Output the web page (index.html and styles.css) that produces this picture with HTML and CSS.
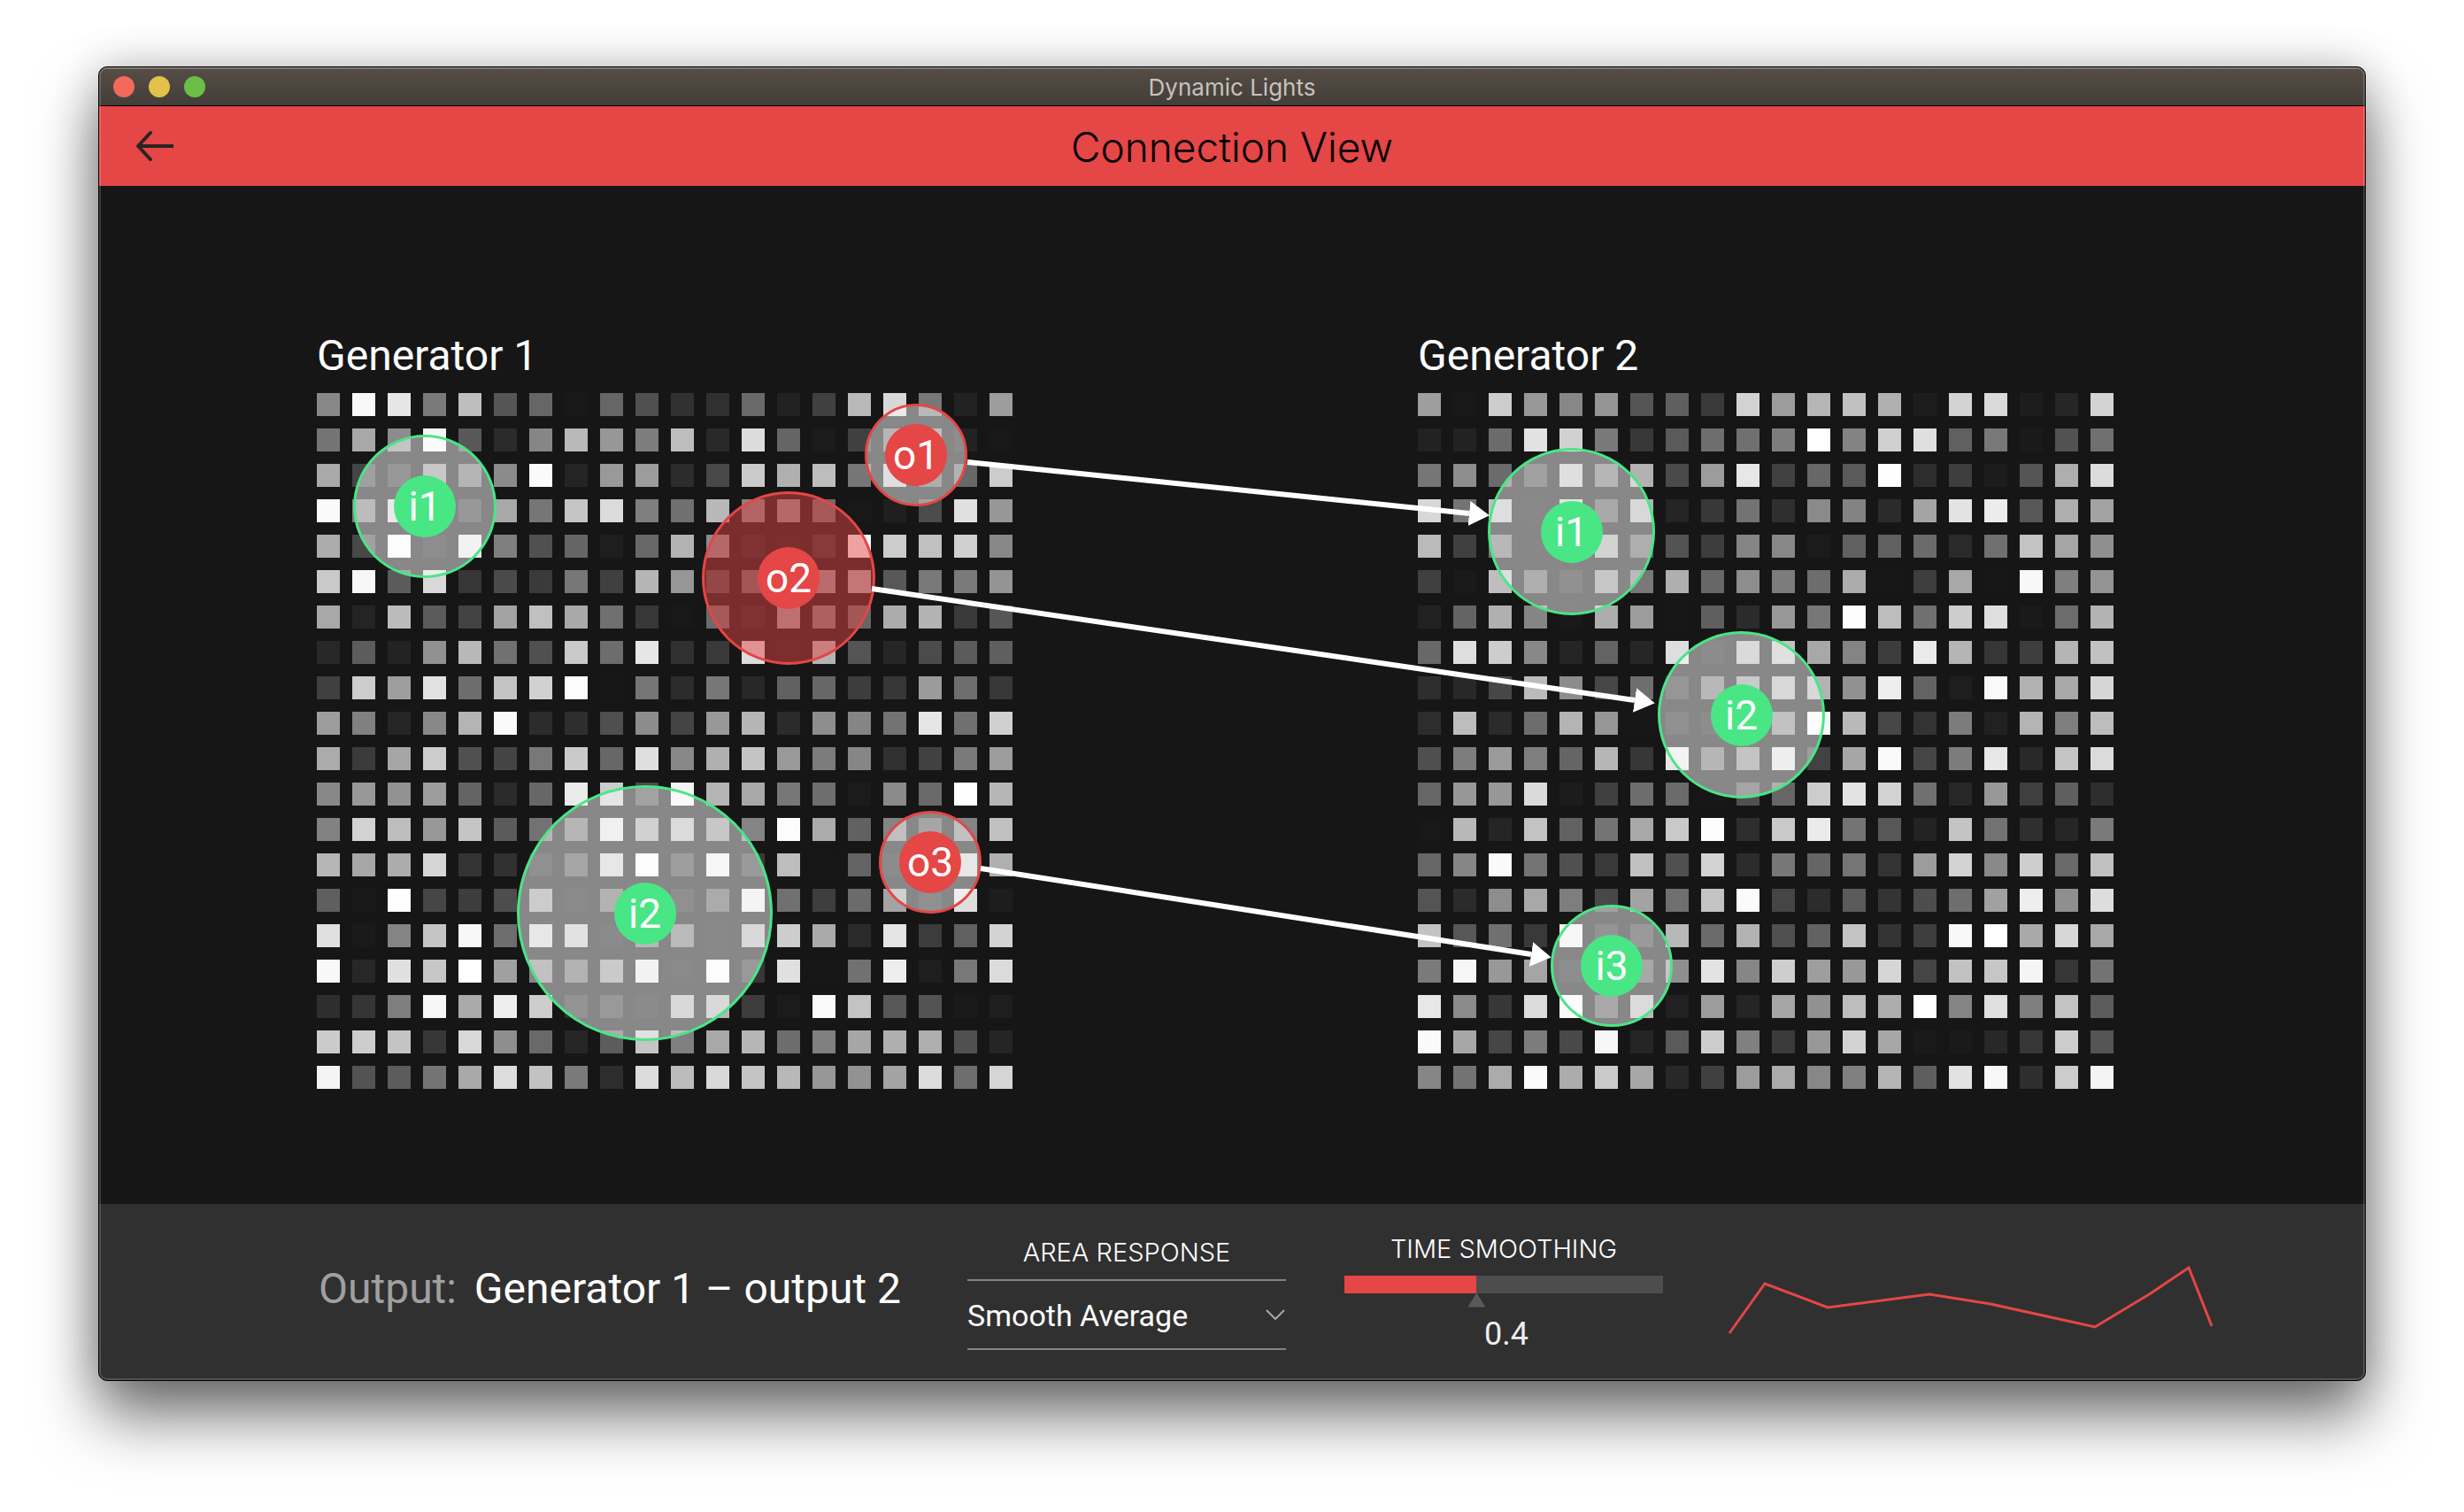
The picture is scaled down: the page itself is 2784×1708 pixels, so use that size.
FILE: index.html
```html
<!DOCTYPE html>
<html lang="en">
<head>
<meta charset="utf-8">
<title>Dynamic Lights</title>
<link rel="stylesheet" href="styles.css">
</head>
<body>
<div class="window">
  <div class="titlebar">
    <div class="lights">
      <button class="light light-close" aria-label="Close"></button>
      <button class="light light-minimize" aria-label="Minimize"></button>
      <button class="light light-zoom" aria-label="Zoom"></button>
    </div>
    <span class="titlebar-text">Dynamic Lights</span>
  </div>

  <header class="toolbar">
    <button class="back" aria-label="Back">
      <svg width="44" height="34" viewBox="0 0 44 34" fill="none" stroke="#2b2424" stroke-width="4">
        <path d="M3 17H43"/>
        <path d="M17 2L3 17L17 32" stroke-linecap="round" stroke-linejoin="round"/>
      </svg>
    </button>
    <h1 class="view-title">Connection View</h1>
  </header>

  <main class="stage">
    <div class="board">
      <section class="generator">
        <h2 class="generator-name">Generator 1</h2>
        <div class="matrix" id="matrix-1">
          <button class="zone input g1-i1"><span class="pin">i1</span></button>
          <button class="zone output g1-o1"><span class="pin">o1</span></button>
          <button class="zone output selected g1-o2"><span class="pin">o2</span></button>
          <button class="zone input g1-i2"><span class="pin">i2</span></button>
          <button class="zone output g1-o3"><span class="pin">o3</span></button>
        </div>
      </section>
      <section class="generator">
        <h2 class="generator-name">Generator 2</h2>
        <div class="matrix" id="matrix-2">
          <button class="zone input g2-i1"><span class="pin">i1</span></button>
          <button class="zone input g2-i2"><span class="pin">i2</span></button>
          <button class="zone input g2-i3"><span class="pin">i3</span></button>
        </div>
      </section>
      <svg class="links" viewBox="0 0 2030 858" fill="none" stroke="#fff" stroke-width="6">
        <defs>
          <marker id="head" markerUnits="userSpaceOnUse" markerWidth="23" markerHeight="28" refX="0" refY="14" orient="auto">
            <path d="M0 0L23 14L0 28Z" fill="#fff" stroke="none"/>
          </marker>
        </defs>
        <path d="M735 150L1302 208" marker-end="url(#head)"/>
        <path d="M627 293L1489 419" marker-end="url(#head)"/>
        <path d="M750 609L1372 706" marker-end="url(#head)"/>
      </svg>
    </div>
  </main>

  <footer class="inspector">
    <p class="subject"><span class="subject-kind">Output:</span> Generator 1 – output 2</p>

    <div class="field">
      <label class="field-label" for="response">AREA RESPONSE</label>
      <div class="picker">
        <select id="response" class="picker-select">
          <option>Smooth Average</option>
        </select>
        <svg class="picker-chevron" width="22" height="12" viewBox="0 0 22 12" fill="none" stroke="#a8a8a8" stroke-width="2">
          <path d="M1 1L11 11L21 1"/>
        </svg>
      </div>
    </div>

    <div class="field field-slider">
      <label class="field-label" for="smoothing">TIME SMOOTHING</label>
      <input id="smoothing" class="slider" type="range" min="0" max="1" step="0.01" value="0.41">
      <output class="slider-value" for="smoothing">0.4</output>
    </div>

    <svg class="trace" width="560" height="84" viewBox="0 0 560 84" fill="none" stroke="#e54646" stroke-width="3">
      <polyline points="9,79 49,23 120,50 235,35 304,46 422,72 485,34 528,5 554,71"/>
    </svg>
  </footer>
</div>
<script src="matrix.js"></script>
</body>
</html>
```
FILE: styles.css
```css
* {
  box-sizing: border-box;
}

body {
  margin: 0;
  min-height: 100vh;
  padding: 75px 111px 148px;
  display: flex;
  background: #fff;
  color: #fff;
  font-family: Roboto, "Liberation Sans", sans-serif;
}

h1, h2, p {
  margin: 0;
  font-weight: 400;
}

button {
  padding: 0;
  border: 0;
  background: none;
  color: inherit;
  font: inherit;
}

.window {
  position: relative;
  flex: 1;
  display: flex;
  flex-direction: column;
  border: 1px solid #000;
  border-radius: 10px;
  overflow: hidden;
  background: #161616;
  box-shadow: 0 40px 70px rgba(0, 0, 0, 0.55), 0 0 50px rgba(0, 0, 0, 0.2);
}

/* thin light edge drawn over the whole window */
.window::after {
  content: "";
  position: absolute;
  inset: 0;
  border-radius: 9px;
  box-shadow: inset 0 0 0 2px rgba(255, 255, 255, 0.16);
  pointer-events: none;
}

.titlebar {
  display: grid;
  grid-template-columns: 1fr auto 1fr;
  align-items: center;
  height: 44px;
  padding: 0 16px;
  border-bottom: 1px solid #000;
  background: linear-gradient(#574d46, #423e39);
  box-shadow: inset 0 2px rgba(255, 255, 255, 0.12);
}

.lights {
  display: flex;
  gap: 16px;
}

.light {
  width: 24px;
  height: 24px;
  border-radius: 50%;
}

.light-close { background: #f3695b; }
.light-minimize { background: #e4c04c; }
.light-zoom { background: #6bbf48; }

.titlebar-text {
  padding-top: 2px;
  color: #c8c2bb;
  font-family: Inter, sans-serif;
  font-size: 26px;
  line-height: 32px;
}

.toolbar {
  display: grid;
  grid-template-columns: 1fr auto 1fr;
  align-items: center;
  height: 90px;
  padding: 0 41px;
  background: #e54646;
  color: #000;
}

.back {
  display: flex;
  justify-self: start;
}

.view-title {
  padding-top: 2px;
  font-family: Inter, sans-serif;
  font-size: 46px;
  font-weight: 300;
  line-height: 56px;
}

.stage {
  flex: 1;
  display: flex;
  justify-content: center;
  padding: 162px 38px 0 0;
}

.board {
  position: relative;
  display: flex;
  align-items: flex-start;
  gap: 458px;
}

.generator-name {
  margin-bottom: 12px;
  font-size: 48px;
  line-height: 60px;
}

.matrix {
  position: relative;
  display: grid;
  grid-template-columns: repeat(20, 26px);
  grid-auto-rows: 26px;
  gap: 14px;
}

.links {
  position: absolute;
  inset: 0;
  width: 100%;
  height: 858px;
  pointer-events: none;
}

.zone {
  position: absolute;
  display: flex;
  align-items: center;
  justify-content: center;
  border: 3px solid;
  border-radius: 50%;
  background: rgba(255, 255, 255, 0.49);
}

.input { border-color: #49e686; }
.output { border-color: #e54646; }
.selected { background: rgba(229, 70, 70, 0.49); }

.pin {
  width: 70px;
  height: 70px;
  border-radius: 50%;
  color: #fff;
  font-size: 46px;
  line-height: 70px;
  text-align: center;
}

.input .pin { background: #49e686; }
.output .pin { background: #e54646; }

.g1-i1 { left: 41px; top: 47px; width: 162px; height: 162px; }
.g1-o1 { left: 619px; top: 12px; width: 116px; height: 116px; }
.g1-o2 { left: 435px; top: 111px; width: 196px; height: 196px; }
.g1-i2 { left: 226px; top: 443px; width: 289px; height: 289px; }
.g1-o3 { left: 635px; top: 472px; width: 116px; height: 116px; }
.g2-i1 { left: 79px; top: 62px; width: 189px; height: 189px; }
.g2-i2 { left: 271px; top: 269px; width: 189px; height: 189px; }
.g2-i3 { left: 150px; top: 578px; width: 138px; height: 138px; }

.inspector {
  display: grid;
  grid-template-columns: 669px 360px 360px 1fr;
  column-gap: 66px;
  align-items: center;
  height: 199px;
  padding: 4px 100px 0 246px;
  background: #303030;
}

.subject {
  padding: 0 0 12px 2px;
  font-size: 48px;
  line-height: 56px;
  white-space: nowrap;
}

.subject-kind {
  margin-right: 8px;
  color: #a0a0a0;
}

.field {
  display: flex;
  flex-direction: column;
  align-items: center;
}

.field-label {
  font-family: Inter, sans-serif;
  font-size: 29px;
  font-weight: 300;
  line-height: 32px;
}

.picker {
  position: relative;
  width: 100%;
  margin-top: 14px;
}

.picker-select {
  width: 100%;
  height: 80px;
  padding: 2px 0 0;
  border: solid #858585;
  border-width: 2px 0;
  border-radius: 0;
  appearance: none;
  background: none;
  color: #fff;
  font-family: inherit;
  font-size: 34px;
}

.picker-chevron {
  position: absolute;
  right: 1px;
  top: 34px;
  pointer-events: none;
}

.slider {
  appearance: none;
  width: 100%;
  height: 20px;
  margin: 14px 0 0;
  background: linear-gradient(90deg, #e54646 149px, #4d4d4d 149px);
}

.slider::-webkit-slider-thumb {
  appearance: none;
  width: 20px;
  height: 16px;
  margin-top: 36px;
  background: #5a5a5a;
  clip-path: polygon(50% 0, 100% 100%, 0 100%);
}

.slider-value {
  margin-top: 24px;
  padding-left: 6px;
  color: #eee;
  font-size: 36px;
  line-height: 44px;
}

.trace {
  margin-top: 14px;
}
```
FILE: matrix.js
```js
// Brightness of every light, one row per line, two hex digits per light.
const levels = {
  "matrix-1": `
88 f8 e6 7a be 55 66 18 66 50 31 30 69 22 40 b9 d8 77 22 9d
74 a8 8c f5 58 2b 86 b9 97 7d bd 29 dc 65 1b 40 71 81 22 18
aa 45 35 93 6d 8b fa 24 99 9c 2c 48 cb b0 bd 76 c1 61 68 cc
fa 7d d5 80 35 a8 76 c5 db 7f 70 b8 82 8a 6a 18 1f 4b e0 97
ac 48 fa 21 e6 7f 50 65 1e 68 b3 8a 22 1a 30 fa cc c0 d0 87
c9 f7 5b d9 36 4a 3a 77 40 b5 96 4a 66 60 92 a6 58 78 7a 94
a8 24 bb 5b 42 a2 c0 a9 70 38 18 6b 22 9a 7a 66 ac b3 3a 56
28 5c 23 91 b8 71 50 c9 6d e6 30 39 dd 18 b4 54 26 4b 5b 5f
40 cc 9e e2 6d c3 d1 fc 17 75 2c 77 27 61 67 3d 37 9b 6e 38
9d 80 26 88 b4 fa 2c 2e 4f 8c 44 98 b5 2b 8d 85 73 e6 70 d0
ab 3b a6 cc 50 44 78 ca 67 df 88 b0 c4 99 7c 86 30 41 7a 9c
88 98 92 9c 63 2b 67 ea cc 4a f3 b4 a8 77 6e 1b 8a 69 fe b6
82 d2 bd 98 c5 5b 72 71 e1 a5 b9 91 84 fc ab 61 84 51 85 c0
b6 a7 ac d6 34 31 27 51 d1 f9 41 ed 3a bd 17 63 1f 50 d1 b0
5f 19 fe 46 3d 4d 9b 1b 6b 70 27 5b e9 70 3e 6b a4 27 de 1d
e0 1a 84 c5 f8 6e d1 c5 1d 75 79 18 b3 cd aa 2a e4 3c 60 d3
f8 27 e0 c7 ff a0 85 6b 97 e5 1b f9 37 e0 17 71 ee 1e 78 db
2e 35 7e f7 aa ee cd 2e 37 1d b5 b5 3c 1b f9 c3 57 53 1a 1e
cb cd c4 37 d8 8e 69 26 5c c5 80 a8 b6 6d 80 a6 af ae 50 25
f3 53 5c 74 a9 dd c2 7a 2d dc bc d8 c4 b8 97 92 a3 dc 6e d5`,
  "matrix-2": `
9e 18 cd 98 87 95 55 5f 39 d2 9c b6 c1 b0 1d d2 da 1d 26 d3
22 22 6b e2 d1 79 38 5a 6e 70 7d ff 83 d0 df 60 78 1a 52 70
76 8d 6b 47 c1 71 b2 4a 9c e7 41 67 5a fe 2d 3e 1c 54 ae dc
d8 74 bf 18 cb 57 b3 24 38 73 2f 8a 83 2b a4 e3 ec 57 ae a3
ba 40 75 16 60 a9 61 53 3d 84 87 1b 60 60 6b 2a 70 c3 a5 8f
40 1a be 63 29 91 78 af 67 8d 7c 6d ac 17 3e a8 17 f8 7f 94
21 64 b0 85 19 ad 9c 17 5f 2b 98 77 fd bd 70 cd df 1a 6c b3
68 de cd 88 25 63 26 de 1f b7 c2 a8 84 3d ea b5 36 3e b5 c1
2e 28 47 bb 8c 47 6e 31 75 97 b3 b3 91 ed 63 1e f9 b2 a8 d6
2d bd 2b 6d b4 96 17 27 21 60 87 f9 b9 47 33 7c 21 b4 7e bd
4f 7d 9b 7e 65 b6 37 e7 71 8b dd 42 a6 fa 45 7c e7 29 c5 db
66 97 97 da 1c 40 6d 6b 17 50 66 cc e3 d2 70 27 98 3f 5f 2e
18 b8 25 c3 62 74 a8 c9 fd 2e c9 eb 74 57 23 c4 72 2f 26 7a
66 86 fa 74 50 39 c0 50 d3 2c 77 65 75 33 9c d2 89 ce 69 c0
54 2b 8d a8 7e 48 a3 6f c3 fb 45 2c 5b 34 4d 6e a1 ee 8f dd
c3 57 70 39 f0 2d 39 b8 6b b3 50 62 c3 34 3e f8 ff a9 d7 a8
7a f6 98 a5 21 80 55 8f e3 86 ce 9e 98 d6 45 c2 c6 f5 36 73
e7 8a 37 dc f9 57 b9 21 9d 25 a6 91 bd ad fe 84 e0 7e c3 5c
fa a7 46 7c 49 f7 25 5a cd 80 3b 98 d2 a7 1a 1a 28 36 cd 54
86 73 ab fa ac ca a7 28 40 9c ab 87 80 b5 5e e2 f8 2e cc f4`
};

for (const [id, text] of Object.entries(levels)) {
  const cells = text.trim().split(/\s+/).map((level) => {
    const cell = document.createElement("i");
    cell.style.background = "#" + level.repeat(3);
    return cell;
  });
  document.getElementById(id).prepend(...cells);
}
```
